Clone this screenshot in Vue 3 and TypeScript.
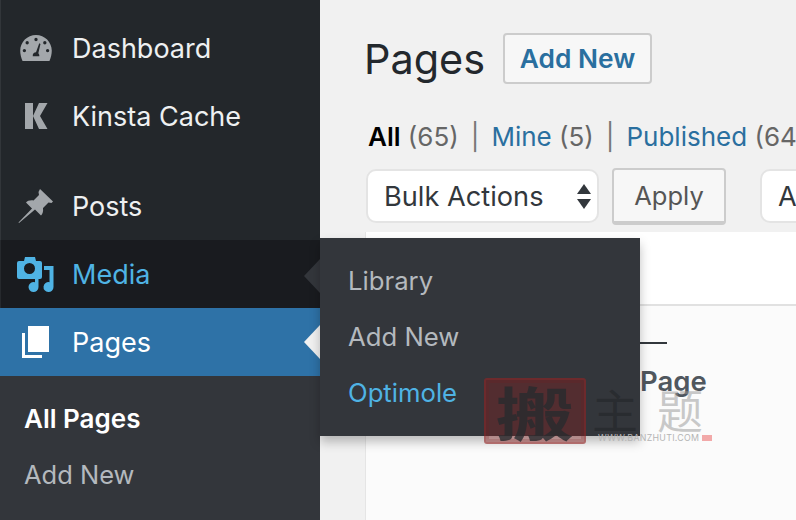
<script setup lang="ts">
const flyout: { label: string; selected?: boolean }[] = [
  { label: 'Library' },
  { label: 'Add New' },
  { label: 'Optimole', selected: true },
]
</script>

<template>
  <div class="page">
    <aside class="sidebar">
      <div class="item first">
        <span class="icon">
          <svg viewBox="0 0 34 28" width="32" height="26">
            <path fill="#a3a7ab" fill-rule="evenodd" d="M17 0C7.6 0 0 7.6 0 17c0 3.7 1 7.500 2.500 11h29C33 24.500 34 20.700 34 17 34 7.600 26.400 0 17 0zM17 3a1.800 1.800 0 1 1 0 3.600A1.800 1.800 0 0 1 17 3zM7.500 6.500a1.800 1.800 0 1 1 0 3.600 1.800 1.800 0 0 1 0-3.600zM26.500 6.500a1.800 1.800 0 1 1 0 3.600 1.800 1.800 0 0 1 0-3.600zM4.500 15a1.800 1.800 0 1 1 0 3.600 1.800 1.800 0 0 1 0-3.600zM29.500 15a1.800 1.800 0 1 1 0 3.600 1.800 1.800 0 0 1 0-3.600zM20.500 9l1.300.6-2.300 10c.9 1 1.300 2.200 1 3.400H13.500c-.3-2.600 1.500-4.300 3.500-4.300z"/>
          </svg>
        </span>
        <span class="label">Dashboard</span>
      </div>
      <div class="item">
        <span class="icon">
          <svg viewBox="0 0 24 26" width="24" height="26">
            <path fill="#a3a7ab" d="M1 0h8v26H1zM9 13 15 0h8.500L16 13l7.500 13H15z"/>
          </svg>
        </span>
        <span class="label">Kinsta Cache</span>
      </div>
      <div class="item separated">
        <span class="icon">
          <svg viewBox="0 0 36 36" width="36" height="36">
            <path fill="#a3a7ab" d="M22 1l13 12.500-1.500 1.500-3-.5-5.500 5.500c.5 3.500-.5 6-2 7.500l-6-6L1 35l-.5-.5L14 20.500l-6-6c1.500-1.500 4-2.500 7.500-2L21 7l-.5-3z"/>
          </svg>
        </span>
        <span class="label">Posts</span>
      </div>
      <div class="item hovered">
        <span class="icon">
          <svg viewBox="0 0 37 37" width="37" height="37">
            <path fill="#4fb3e4" fill-rule="evenodd" d="M2 5h5l1-4h10l1 4h4a2 2 0 0 1 2 2v14a2 2 0 0 1-2 2H2a2 2 0 0 1-2-2V7a2 2 0 0 1 2-2zM12.500 7a5.500 5.500 0 1 0 0 11 5.500 5.500 0 0 0 0-11z"/>
            <path fill="#4fb3e4" d="M27 10h9.500v21a5 5 0 1 1-4-4.800V14H27zM18 21.500h3.500V31a5 5 0 1 1-3.500-4.700z"/>
          </svg>
        </span>
        <span class="label">Media</span>
        <span class="notch dark"></span>
      </div>
      <div class="item active">
        <span class="icon">
          <svg viewBox="0 0 27 32" width="27" height="32">
            <path fill="#fff" d="M6 0h21v26H6z"/>
            <path fill="#fff" d="M0 7h3v22h17v3H0z"/>
          </svg>
        </span>
        <span class="label">Pages</span>
        <span class="notch light"></span>
      </div>
      <div class="submenu">
        <div class="sub strong">All Pages</div>
        <div class="sub">Add New</div>
      </div>
    </aside>

    <main class="content">
      <header class="title-row">
        <h1>Pages</h1>
        <span class="add-button">Add New</span>
      </header>
      <nav class="filters">
        <span class="current">All</span><span class="count"> (65)</span>
        <span class="pipe">|</span>
        <span class="link">Mine</span><span class="count"> (5)</span>
        <span class="pipe">|</span>
        <span class="link">Published</span><span class="count"> (64)</span>
      </nav>
      <div class="actions">
        <div class="select">
          <span>Bulk Actions</span>
          <span class="arrows"><i class="up"></i><i class="down"></i></span>
        </div>
        <span class="apply">Apply</span>
        <div class="select second"><span>All dates</span></div>
      </div>
      <section class="table">
        <div class="table-head"></div>
        <div class="table-row">
          <span class="dash"></span>
          <strong>Page</strong>
        </div>
      </section>
    </main>

    <div class="flyout">
      <div
        v-for="entry in flyout"
        :key="entry.label"
        class="fly-item"
        :class="{ selected: entry.selected }"
      >
        {{ entry.label }}
      </div>
    </div>

    <div class="watermark">
      <div class="seal"><span>搬</span></div>
      <div class="wm-text">
        <div class="wm-cn"><span class="wm-dim">主</span><span>题</span></div>
        <div class="wm-url">WWW.BANZHUTI.COM <i></i></div>
      </div>
    </div>
  </div>
</template>

<style>
html, body { margin: 0; background: #f1f1f1; }
</style>

<style scoped>
.page {
  position: relative;
  display: flex;
  width: 796px;
  height: 520px;
  overflow: hidden;
  background: #f1f1f1;
  font-family: Inter, "Noto Sans", sans-serif;
  -webkit-font-smoothing: antialiased;
}
.sidebar {
  flex: 0 0 320px;
  display: flex;
  flex-direction: column;
  padding-top: 14px;
  box-sizing: border-box;
  background: #23272b;
  box-shadow: inset 1px 0 #32363a;
}
.item {
  position: relative;
  display: flex;
  align-items: center;
  flex: 0 0 68px;
  color: #eef0f1;
  font-size: 27px;
}
.item.separated { margin-top: 22px; }
.item.hovered { background: #191b1f; color: #4fb3e4; box-shadow: inset 1px 0 #26292d; }
.item.active { background: #2e72a7; color: #fff; }
.icon {
  flex: 0 0 72px;
  display: flex;
  justify-content: center;
}
.icon svg { margin-left: -1px; }
.notch {
  position: absolute;
  right: 0;
  top: 50%;
  margin-top: -17px;
  border: 17px solid transparent;
  border-left: 0;
  border-right-width: 16px;
}
.notch.dark { margin-top: -15px; border-right-color: #33363b; }
.notch.light { border-right-color: #f1f1f1; }
.submenu {
  flex: 1;
  padding-top: 15px;
  background: #33363b;
}
.sub {
  height: 56px;
  line-height: 56px;
  padding-left: 24px;
  color: #b4b9be;
  font-size: 25.500px;
}
.sub.strong { color: #fff; font-weight: 600; font-size: 26px; }
.content {
  flex: 1;
  min-width: 0;
  padding: 33px 0 0 45px;
  box-sizing: border-box;
}
.title-row {
  display: flex;
  align-items: center;
  gap: 18px;
  height: 51px;
}
h1 {
  margin: 0 0 0 -1px;
  font-size: 41.400px;
  font-weight: 400;
  color: #23282d;
}
.add-button {
  box-sizing: border-box;
  width: 149px;
  height: 51px;
  line-height: 48px;
  text-align: center;
  border: 2px solid #ccc;
  border-radius: 4px;
  background: #f7f7f7;
  color: #2a6f9f;
  font-size: 26.300px;
  font-weight: 600;
}
.filters {
  display: flex;
  margin-top: 35px;
  padding-left: 3px;
  height: 36px;
  line-height: 36px;
  font-size: 26px;
  color: #666;
  white-space: pre;
}
.current { color: #000; font-weight: 600; }
.link { color: #2a6f9f; }
.pipe { margin: 0 12px; color: #777; }
.actions {
  display: flex;
  align-items: flex-start;
  gap: 13px;
  margin-top: 13px;
  white-space: nowrap;
}
.select {
  box-sizing: border-box;
  flex: none;
  display: flex;
  align-items: center;
  justify-content: space-between;
  width: 233px;
  height: 54px;
  margin: 1px 0 0 1px;
  padding: 0 6px 0 16px;
  border: 2px solid #e4e4e4;
  border-radius: 10px;
  background: #fff;
  color: #32373c;
  font-size: 27.200px;
}
.select.second {
  width: 120px;
  margin-left: 21px;
}
.arrows {
  display: flex;
  flex-direction: column;
  gap: 5px;
}
.arrows i {
  display: block;
  border: 7px solid transparent;
  border-top: 0;
  border-bottom: 10px solid #32373c;
}
.arrows i.down {
  border-bottom: 0;
  border-top: 10px solid #32373c;
}
.apply {
  box-sizing: border-box;
  flex: none;
  width: 114px;
  height: 57px;
  line-height: 52px;
  text-align: center;
  border: 2px solid #ccc;
  border-bottom-width: 4px;
  border-radius: 4px;
  background: #f7f7f7;
  color: #555;
  font-size: 25.500px;
}
.table {
  margin-top: 7px;
  height: 288px;
  background: #fff;
  border-left: 1px solid #e5e5e5;
}
.table-head {
  height: 72px;
  border-bottom: 2px solid #e1e1e1;
}
.table-row {
  display: flex;
  flex-direction: column;
  height: 100%;
  padding: 36px 0 0 274px;
  background: #fbfbfb;
}
.dash {
  width: 27px;
  height: 2px;
  background: #32373c;
}
.table-row strong {
  margin-top: 20px;
  font-size: 27.500px;
  font-weight: 600;
  color: #50575e;
}
.flyout {
  position: absolute;
  left: 320px;
  top: 238px;
  width: 320px;
  height: 198px;
  padding-top: 15px;
  box-sizing: border-box;
  background: #33363b;
  box-shadow: 0 6px 10px rgba(0, 0, 0, 0.25);
}
.fly-item {
  height: 56px;
  line-height: 56px;
  padding-left: 28px;
  color: #b4b9be;
  font-size: 25.700px;
}
.fly-item.selected { color: #4fb3e4; }
.watermark {
  position: absolute;
  left: 484px;
  top: 378px;
  display: flex;
  gap: 6px;
  pointer-events: none;
}
.seal {
  box-sizing: border-box;
  display: flex;
  align-items: center;
  justify-content: center;
  overflow: hidden;
  width: 102px;
  height: 66px;
  border: 2px solid rgba(150, 40, 40, 0.4);
  border-radius: 3px;
  box-shadow: inset 0 0 0 3px rgba(120, 30, 30, 0.2);
  background: rgba(140, 30, 30, 0.36);
  color: rgba(40, 42, 46, 0.8);
  font-family: "Noto Sans CJK SC", sans-serif;
  font-size: 58px;
  font-weight: 700;
}
.seal span { transform: scaleX(1.35); }
.wm-text { padding-top: 8px; width: 128px; }
.wm-cn {
  display: flex;
  gap: 19px;
  color: rgba(150, 150, 150, 0.5);
  font-family: "Noto Sans CJK SC", sans-serif;
  font-size: 46px;
  line-height: 44px;
  white-space: pre;
}
.wm-dim { color: rgba(30, 32, 36, 0.45); }
.wm-url {
  margin-top: 2px;
  padding-left: 6px;
  font-size: 8.800px;
  letter-spacing: 0.3px;
  color: #b5b5b5;
  white-space: nowrap;
}
.wm-url i {
  display: inline-block;
  width: 10px;
  height: 6px;
  background: #f2a9a9;
}
</style>
